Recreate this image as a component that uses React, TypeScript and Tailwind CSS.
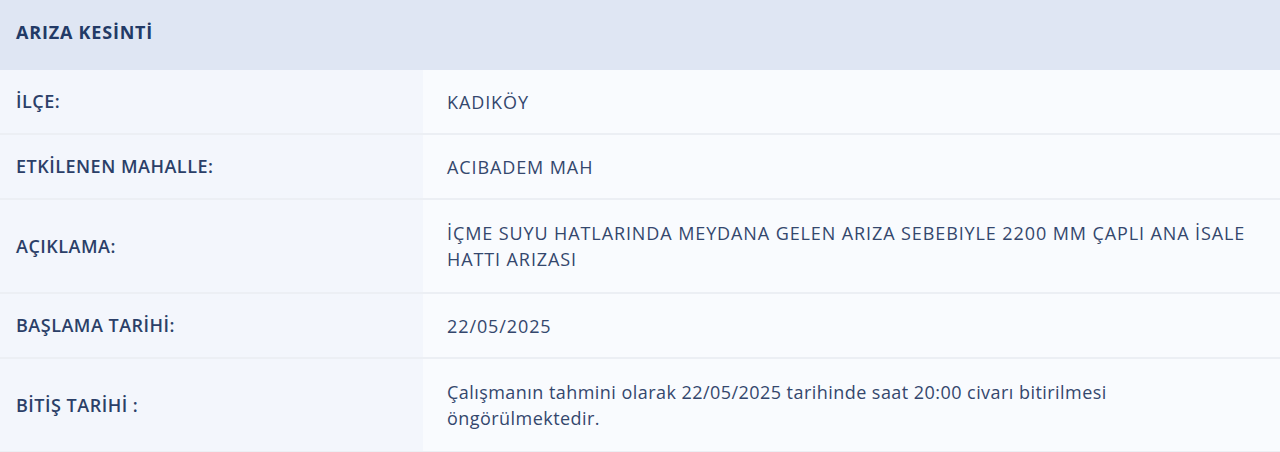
import React from 'react';

// Types
interface InfoRow {
  label: string;
  value: string;
  tall?: boolean;
  sentence?: boolean;
}

const rows: InfoRow[] = [
  { label: 'İLÇE:', value: 'KADIKÖY' },
  { label: 'ETKİLENEN MAHALLE:', value: 'ACIBADEM MAH' },
  {
    label: 'AÇIKLAMA:',
    value: 'İÇME SUYU HATLARINDA MEYDANA GELEN ARIZA SEBEBIYLE 2200 MM ÇAPLI ANA İSALE HATTI ARIZASI',
    tall: true,
  },
  { label: 'BAŞLAMA TARİHİ:', value: '22/05/2025' },
  {
    label: 'BİTİŞ TARİHİ :',
    value: 'Çalışmanın tahmini olarak 22/05/2025 tarihinde saat 20:00 civarı bitirilmesi öngörülmektedir.',
    tall: true,
    sentence: true,
  },
];

export default function App() {
  return (
    <div className="w-[1280px] h-[452px] bg-white font-['Open_Sans',sans-serif] overflow-hidden">
      {/* Header */}
      <div className="h-[70px] bg-[#dfe6f3] flex items-center px-4 pb-[6px]">
        <h2 className="text-[18px] font-bold text-[#223a66] tracking-[0.8px]">ARIZA KESİNTİ</h2>
      </div>

      {/* Rows */}
      {rows.map((row) => (
        <div
          key={row.label}
          className={`flex border-b-2 border-[#eceff4] ${row.tall ? 'h-[94px]' : 'h-[65px]'}`}
        >
          <div className="w-[423px] shrink-0 bg-[#f3f6fc] flex items-center px-4">
            <span className="text-[18px] font-semibold text-[#2b3f68] tracking-[0.5px]">{row.label}</span>
          </div>
          <div className="flex-1 bg-[#f9fbfe] flex items-center pl-6">
            {row.sentence ? (
              <span className="max-w-[740px] text-[18px] leading-[26px] text-[#34476d] tracking-[0.45px]">
                {row.value}
              </span>
            ) : (
              <span className="max-w-[808px] text-[18px] leading-[26px] text-[#34476d] tracking-[0.9px]">
                {row.value}
              </span>
            )}
          </div>
        </div>
      ))}
    </div>
  );
}
